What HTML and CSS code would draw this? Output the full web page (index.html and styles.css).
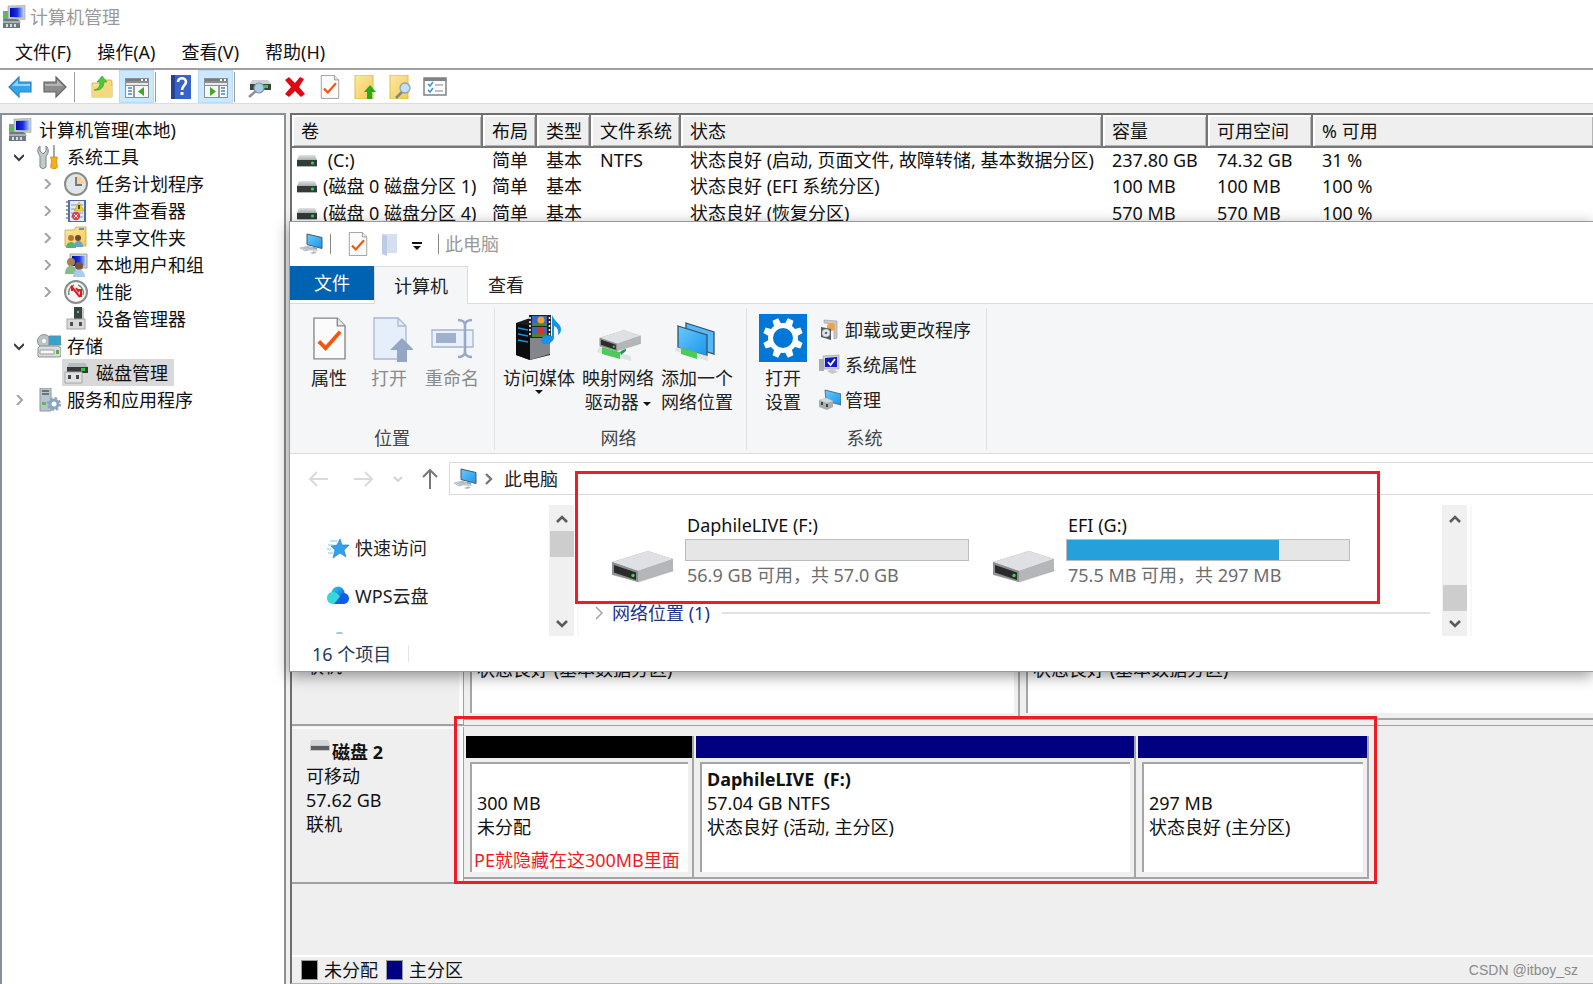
FILE: index.html
```html
<!DOCTYPE html>
<html lang="zh-CN">
<head>
<meta charset="utf-8">
<title>计算机管理</title>
<link rel="stylesheet" href="styles.css">
</head>
<body>
<svg class="defs" aria-hidden="true">
  <defs>
    <linearGradient id="gBlue" x1="0" y1="0" x2="1" y2="1"><stop offset="0" stop-color="#6cc8fb"/><stop offset="1" stop-color="#1897ef"/></linearGradient>
    <linearGradient id="gNavy" x1="0" y1="0" x2="1" y2="0"><stop offset="0" stop-color="#0008b8"/><stop offset=".55" stop-color="#1a2fe0"/><stop offset="1" stop-color="#9fc0ff"/></linearGradient>
    <linearGradient id="gGray" x1="0" y1="0" x2="0" y2="1"><stop offset="0" stop-color="#e2e4e6"/><stop offset="1" stop-color="#a9adb0"/></linearGradient>
    <linearGradient id="gYellow" x1="0" y1="0" x2="1" y2="1"><stop offset="0" stop-color="#ffe9a0"/><stop offset="1" stop-color="#f2ca55"/></linearGradient>
    <linearGradient id="gCloud" x1="0" y1="0" x2="1" y2="1"><stop offset="0" stop-color="#2fd6f0"/><stop offset="1" stop-color="#0a52e0"/></linearGradient>
  </defs>
  <symbol id="mgmt" viewBox="0 0 24 24">
    <path d="M1 6h5v10H1z" fill="#8d959b"/><path d="M2 9h3v3H2z" fill="#38d33c"/>
    <path d="M6 1l17-.6v14L6 14z" fill="#c9cdc4" stroke="#9a9f9b" stroke-width=".6"/>
    <path d="M8 3l13-.5v10L8 12z" fill="url(#gNavy)"/>
    <path d="M13 14h4l2 4h-8z" fill="#b6bbbe"/>
    <path d="M1 16l2-2h12l3 2v7H1z" fill="#6c7a80"/><path d="M1 16h17v2H1z" fill="#a6b1b6"/>
    <path d="M4 19h2v3H4zM8 19h2v3H8zM12 19h2v3h-2z" fill="#d6dde0"/>
  </symbol>
  <symbol id="vol" viewBox="0 0 20 12">
    <path d="M2 0h16l2 5H0z" fill="url(#gGray)"/><path d="M0 5h20v6H0z" fill="#333a3a"/><path d="M0 11h20v1H0z" fill="#b5b8ba"/><circle cx="15.500" cy="8" r="1.600" fill="#25e035"/>
  </symbol>
  <symbol id="volgray" viewBox="0 0 20 12">
    <path d="M1 0h17l2 5H0z" fill="#d5d8da"/><path d="M0 5h20v6H0z" fill="#c6c8ca"/><path d="M1 6h18v4H1z" fill="#5d5f60"/>
  </symbol>
  <symbol id="thispc" viewBox="0 0 24 22">
    <path d="M7 1l15 3.500v11L7 11.500z" fill="url(#gBlue)" stroke="#4a5a66" stroke-width="1"/>
    <path d="M13 13.500l4 1v3l-5-1z" fill="#8ea0ad"/><path d="M9 17l6 1.500 4-1-5-2z" fill="#c9d3da"/>
    <path d="M0 15l9-2 5 2.500-9 2.500z" fill="#d3dae0" stroke="#9aa6af" stroke-width=".6"/><path d="M3 15.500l7-1.500M5 16.500l7-1.500" stroke="#93a0aa" stroke-width=".6"/>
    <path d="M10 20l4-1.500 3 1-4 1.500z" fill="#aab6bf"/>
  </symbol>
  <symbol id="doccheck" viewBox="0 0 34 44">
    <path d="M1 1h24l8 8v34H1z" fill="#fbfbfb" stroke="#84888c" stroke-width="1.400"/><path d="M25 1v8h8" fill="#e8eaec" stroke="#84888c" stroke-width="1.400"/>
    <path d="M6 25l7 7 15-17" fill="none" stroke="#f4560e" stroke-width="4"/>
  </symbol>
  <symbol id="drive" viewBox="0 0 64 34">
    <path d="M27 33l37-12-3-3-30 8z" fill="#e6e6e7"/>
    <path d="M1 12L37 1l25 8v12L27 32 1 25z" fill="#a9abae"/><path d="M1 12L37 1l25 8-35 12z" fill="#dfe0e3"/>
    <path d="M27 21l35-12v11L27 32z" fill="#b4b6b9"/><path d="M1 12l26 9v11L1 24z" fill="#8d8f92"/><path d="M3 15l22 7.500v7.500L3 22.500z" fill="#2a2a2b"/><circle cx="22" cy="25.500" r="1.700" fill="#2be23a"/>
  </symbol>
  <symbol id="up" viewBox="0 0 12 8"><path d="M1 7l5-5 5 5" fill="none" stroke="#5b5b5b" stroke-width="2.600"/></symbol>
  <symbol id="down" viewBox="0 0 12 8"><path d="M1 1l5 5 5-5" fill="none" stroke="#5b5b5b" stroke-width="2.600"/></symbol>
  <symbol id="open" viewBox="0 0 10 10"><path d="M0 3l5 5 5-5" fill="none" stroke="#3c3c3c" stroke-width="2"/></symbol>
  <symbol id="closed" viewBox="0 0 10 10"><path d="M3 0l5 5-5 5" fill="none" stroke="#a3a3a3" stroke-width="2"/></symbol>
  <symbol id="pane" viewBox="0 0 24 20">
    <path d="M0 0h24v20H0z" fill="#8b8f94"/><path d="M1 1h22v2H1z" fill="#777c82"/><path d="M16 1h2v2h-2zM20 1h2v2h-2z" fill="#fff"/>
    <path d="M1 5h22v2H1z" fill="#e6e8ea"/><path d="M1 8h22v11H1z" fill="#f7f8f9"/>
  </symbol>
</svg>

<header class="titlebar"><svg class="i24"><use href="#mgmt"/></svg><h1>计算机管理</h1></header>
<nav class="menu"><button>文件(F)</button><button>操作(A)</button><button>查看(V)</button><button>帮助(H)</button></nav>

<div class="toolbar">
  <button aria-label="后退"><svg class="i24" viewBox="0 0 24 24"><path d="M1 12L11 2v5h12v10H11v5z" fill="#2ea5ee" stroke="#3683b4" stroke-width="1.200"/><path d="M4 11l6-6v4h12v2z" fill="#8fd5fb"/></svg></button>
  <button aria-label="前进"><svg class="i24" viewBox="0 0 24 24"><path d="M23 12L13 2v5H1v10h12v5z" fill="#8c8c8c" stroke="#666" stroke-width="1.200"/><path d="M20 11l-6-6v4H2v2z" fill="#b5b5b5"/></svg></button>
  <span class="sep"></span>
  <button aria-label="上一级"><svg class="i24" viewBox="0 0 24 24"><path d="M2 8h8l2-3h9l1 2v15H2z" fill="url(#gYellow)" stroke="#c9a24a" stroke-width=".8"/><path d="M2 11h20v11H2z" fill="#f6d782"/><path d="M4 15c4-1 6-3 6-8H7l5-6 5 6h-3c0 6-4 9-10 8z" fill="#4cc93a" stroke="#329a28" stroke-width=".6"/></svg></button>
  <button class="on" aria-label="显示控制台树"><svg class="i24" viewBox="0 0 24 24"><use href="#pane" y="3" width="24" height="20"/><path d="M9 11v11" stroke="#777c82" stroke-width="1.500"/><path d="M3 13h4M3 16h4M3 19h4" stroke="#4d86c4" stroke-width="1.500"/><path d="M19 12v9l-6-4.500z" fill="#41a72c"/></svg></button>
  <span class="sep tight"></span>
  <button aria-label="帮助"><svg class="i24" viewBox="0 0 24 24"><path d="M2 0h20v24H2z" fill="#3a62cc"/><path d="M2 0h4v24H2z" fill="#25418f"/><path d="M9 7c0-5 8-5 8 0 0 3-4 4-4 8" fill="none" stroke="#fff" stroke-width="2.600"/><path d="M11.500 17h3v3h-3z" fill="#fff"/></svg></button>
  <button class="on" aria-label="显示操作窗格"><svg class="i24" viewBox="0 0 24 24"><use href="#pane" y="3" width="24" height="20"/><path d="M15 11v11" stroke="#777c82" stroke-width="1.500"/><path d="M17 13h4M17 16h4M17 19h4" stroke="#4d86c4" stroke-width="1.500"/><path d="M6 12v9l6-4.500z" fill="#41a72c"/></svg></button>
  <span class="sep tight"></span>
  <button aria-label="连接"><svg class="i24" viewBox="0 0 24 24"><path d="M4 5h16l3 4H2z" fill="#cfd2d4"/><path d="M2 9h21v6H2z" fill="#3b4242"/><path d="M16 10h4v3h-4z" fill="#2bd43b"/><path d="M8 16l-7 6" stroke="#8b9399" stroke-width="2.500"/><circle cx="11" cy="13" r="5" fill="#a9cde6" stroke="#7d96a6" stroke-width="1.200"/></svg></button>
  <button aria-label="删除"><svg class="i24" viewBox="0 0 24 24"><path d="M2 5l4-3 6 6 5-6 4 2-5 8 6 7-4 3-6-6-6 6-4-3 6-7z" fill="#dd0a14"/></svg></button>
  <button aria-label="属性"><svg class="i24"><use href="#doccheck"/></svg></button>
  <button aria-label="上移"><svg class="i24" viewBox="0 0 24 24"><path d="M2 0h18v24H2z" fill="url(#gYellow)" stroke="#e0bb50"/><path d="M14 24v-7h-3l6-7 6 7h-4v7z" fill="#27ab1e"/></svg></button>
  <button aria-label="查找"><svg class="i24" viewBox="0 0 24 24"><path d="M2 0h18v24H2z" fill="url(#gYellow)" stroke="#e0bb50"/><path d="M14 17l-6 6" stroke="#7d868c" stroke-width="2.500"/><circle cx="17" cy="13" r="5" fill="#c4e0f2" stroke="#8aa4b5" stroke-width="1.300"/></svg></button>
  <button aria-label="设置"><svg class="i24" viewBox="0 0 24 24"><path d="M1 3h22v17H1z" fill="#fdfdfd" stroke="#7e8389" stroke-width="1.500"/><path d="M1 3h22v3H1z" fill="#7e8389"/><path d="M5 9l2 2 3-4M5 15l2 2 3-4" fill="none" stroke="#3b95d6" stroke-width="1.500"/><path d="M12 10h8M12 16h8" stroke="#a9adb1" stroke-width="1.500"/></svg></button>
</div>

<main class="panes">
  <aside class="treepane">
    <ul class="tree">
      <li class="l0"><svg class="i24"><use href="#mgmt"/></svg><span>计算机管理(本地)</span></li>
      <li class="l1"><svg class="chev"><use href="#open"/></svg><svg class="i24" viewBox="0 0 24 24"><path d="M3 1v5l3 3 3-3V1c3 2 3 8 0 10v11l-3 2-3-2V11C0 8 0 3 3 1z" fill="#c3c8ca" stroke="#7f8588"/><path d="M16 0h2v12h-2z" fill="#a3a8ab"/><path d="M13.500 12h7l-1 4 1 6-2 2h-3l-2-2 1-6z" fill="#f2ae1c" stroke="#c4860c" stroke-width=".7"/></svg><span>系统工具</span></li>
      <li class="l2"><svg class="chev"><use href="#closed"/></svg><svg class="i24" viewBox="0 0 24 24"><circle cx="12" cy="12" r="11" fill="#dfe6ea" stroke="#8c8c8a" stroke-width="2"/><path d="M12 4a8 8 0 0 1 8 8h-8z" fill="#f6d293"/><path d="M12 5v8h6" fill="none" stroke="#6a7782" stroke-width="1.800"/></svg><span>任务计划程序</span></li>
      <li class="l2"><svg class="chev"><use href="#closed"/></svg><svg class="i24" viewBox="0 0 24 24"><path d="M4 1h18v22H4z" fill="#4e6bad"/><path d="M6 2h14v20H6z" fill="#e3eaf6"/><path d="M7 6h12M7 10h12M7 14h12M7 18h12" stroke="#7d9cd2"/><path d="M2 3h4M2 7h4M2 11h4M2 15h4M2 19h4" stroke="#778" stroke-width="1.600"/><path d="M15 3l5 9H10z" fill="#f7cf1d" stroke="#b8920c" stroke-width=".5"/><path d="M15 6v4" stroke="#222" stroke-width="1.500"/><circle cx="12" cy="17" r="4.200" fill="#d9404a"/><path d="M10 15l4 4M14 15l-4 4" stroke="#fff"/></svg><span>事件查看器</span></li>
      <li class="l2"><svg class="chev"><use href="#closed"/></svg><svg class="i24" viewBox="0 0 24 24"><path d="M1 4h9l2-3h10v19H1z" fill="url(#gYellow)" stroke="#caa24c" stroke-width=".8"/><path d="M15 2h5v2h-5z" fill="#4f9be0"/><circle cx="7" cy="12" r="3" fill="#b5763e"/><circle cx="14" cy="12" r="3" fill="#6b4a30"/><path d="M2 22c0-8 10-8 10 0z" fill="#57b46c"/><path d="M10 21c0-8 9-8 9 0z" fill="#62a3d0"/></svg><span>共享文件夹</span></li>
      <li class="l2"><svg class="chev"><use href="#closed"/></svg><svg class="i24" viewBox="0 0 24 24"><path d="M6 1h17v14H6z" fill="#d0d3cc" stroke="#a1a49f"/><path d="M8 3h13v10H8z" fill="url(#gNavy)"/><circle cx="7" cy="9" r="4" fill="#a5824f"/><path d="M1 21c0-11 11-11 12 0z" fill="#86bd86"/><circle cx="15" cy="13" r="4" fill="#79543a"/><path d="M9 24c0-10 12-10 12 0z" fill="#a9cbee"/></svg><span>本地用户和组</span></li>
      <li class="l2"><svg class="chev"><use href="#closed"/></svg><svg class="i24" viewBox="0 0 24 24"><circle cx="12" cy="12" r="11" fill="#f4f5f4" stroke="#8c8c8a" stroke-width="2"/><path d="M5 15a8 8 0 0 1 5-10M14 5a8 8 0 0 1 5 10" stroke="#5e9a78" stroke-width="1.500" fill="none"/><path d="M7 6l9 11M8 6v5M17 17v-7h-3M12 8l3 4" stroke="#dd1c22" stroke-width="2" fill="none"/></svg><span>性能</span></li>
      <li class="l2"><svg class="chev"></svg><svg class="i24" viewBox="0 0 24 24"><path d="M10 0h8v13h-8z" fill="#3d4244"/><path d="M13 4h2v2h-2z" fill="#3ee04d"/><path d="M18 1h2v12h-2z" fill="#c5c8c9"/><path d="M3 12h18v10H3z" fill="#d8dadb" stroke="#a2a5a6"/><path d="M6 15h3v4H6zM15 15h3v4h-3z" fill="#4b4f51"/></svg><span>设备管理器</span></li>
      <li class="l1"><svg class="chev"><use href="#open"/></svg><svg class="i24" viewBox="0 0 24 24"><circle cx="7" cy="7" r="6.500" fill="#bcc2c4" stroke="#8b9092"/><circle cx="7" cy="7" r="2" fill="#eff"/><path d="M12 2h12v9H12z" fill="#34a3cf" stroke="#6f8b98"/><path d="M1 14l2-2h18l3 2v8l-1 1H2l-1-1z" fill="#d9dcde" stroke="#8d9193"/><path d="M3 16h14v4H3z" fill="#f8f8f8" stroke="#9a9d9f"/><path d="M19 16h3v4h-3z" fill="#57b344"/></svg><span>存储</span></li>
      <li class="l2 selected"><svg class="chev"></svg><svg class="i24" viewBox="0 0 24 24"><path d="M5 2h16l3 4H3z" fill="#b9bcbe"/><path d="M3 6h21v6H3z" fill="#343a3a"/><path d="M17 7h4v3h-4z" fill="#24c835"/><path d="M1 11h17v11H1z" fill="#e1e2e3" stroke="#a4a6a8"/><path d="M4 14h3v4H4zM12 14h3v4h-3z" fill="#46494b"/></svg><span>磁盘管理</span></li>
      <li class="l1"><svg class="chev"><use href="#closed"/></svg><svg class="i24" viewBox="0 0 24 24"><path d="M3 0h11v23H3z" fill="#b9c3cc" stroke="#8b98a3"/><path d="M5 3h7M5 6h7" stroke="#4d5a63" stroke-width="1.500"/><path d="M5 14h4v3H5z" fill="#4fc057"/><circle cx="17" cy="16" r="4" fill="#fff" stroke="#88a5c3" stroke-width="3"/><circle cx="17" cy="16" r="6" fill="none" stroke="#88a5c3" stroke-width="2" stroke-dasharray="2.500 2.200"/></svg><span>服务和应用程序</span></li>
    </ul>
  </aside>

  <section class="work">
    <div class="volumes">
      <table>
        <colgroup><col class="c-vol"><col class="c-s"><col class="c-s"><col class="c-fs"><col class="c-st"><col class="c-n"><col class="c-n"><col></colgroup>
        <thead><tr><th>卷</th><th>布局</th><th>类型</th><th>文件系统</th><th>状态</th><th>容量</th><th>可用空间</th><th>% 可用</th></tr></thead>
        <tbody>
          <tr><td class="v"><svg class="ivol"><use href="#vol"/></svg>&nbsp;(C:)</td><td>简单</td><td>基本</td><td>NTFS</td><td>状态良好 (启动, 页面文件, 故障转储, 基本数据分区)</td><td>237.80 GB</td><td>74.32 GB</td><td>31 %</td></tr>
          <tr><td class="v"><svg class="ivol"><use href="#vol"/></svg>(磁盘 0 磁盘分区 1)</td><td>简单</td><td>基本</td><td></td><td>状态良好 (EFI 系统分区)</td><td>100 MB</td><td>100 MB</td><td>100 %</td></tr>
          <tr><td class="v"><svg class="ivol"><use href="#vol"/></svg>(磁盘 0 磁盘分区 4)</td><td>简单</td><td>基本</td><td></td><td>状态良好 (恢复分区)</td><td>570 MB</td><td>570 MB</td><td>100 %</td></tr>
        </tbody>
      </table>
    </div>

    <div class="disk">
      <div class="label"><p></p><p></p><p></p><p>联机</p></div>
      <div class="graph wide">
        <div class="part" style="width:556px"><div class="bar"></div><div class="cell"><p></p><p></p><p>状态良好 (基本数据分区)</p></div></div>
        <div class="part rest"><div class="bar"></div><div class="cell"><p></p><p></p><p>状态良好 (基本数据分区)</p></div></div>
      </div>
    </div>
    <div class="disk">
      <div class="label"><p class="name"><svg class="ivol"><use href="#volgray"/></svg><b>磁盘 2</b></p><p>可移动</p><p>57.62 GB</p><p>联机</p></div>
      <div class="graph">
        <div class="part" style="width:230px"><div class="bar free"></div><div class="cell"><p></p><p>300 MB</p><p>未分配</p><span class="note">PE就隐藏在这300MB里面</span></div></div>
        <div class="part" style="width:442px"><div class="bar"></div><div class="cell"><p><b>DaphileLIVE&nbsp; (F:)</b></p><p>57.04 GB NTFS</p><p>状态良好 (活动, 主分区)</p></div></div>
        <div class="part" style="width:233px"><div class="bar"></div><div class="cell"><p></p><p>297 MB</p><p>状态良好 (主分区)</p></div></div>
        <span class="mark"></span>
      </div>
    </div>
    <div class="blank"></div>
    <footer class="legend"><span class="key free"></span><span>未分配</span><span class="key"></span><span>主分区</span><span class="credit">CSDN @itboy_sz</span></footer>

    <section class="explorer">
      <div class="caption">
        <svg class="i24"><use href="#thispc"/></svg><span class="bar-sep"></span>
        <svg class="i24 q1"><use href="#doccheck"/></svg>
        <svg class="i24" viewBox="0 0 24 24"><path d="M4 2h15v19H7z" fill="#d4dff0"/><path d="M4 2l5 2v20l-5-2z" fill="#bccce4"/></svg>
        <svg class="qdrop" viewBox="0 0 10 8"><path d="M0 0h10v2H0zM1 4h8L5 8z" fill="#111"/></svg>
        <span class="bar-sep"></span><h2>此电脑</h2>
      </div>
      <div class="tabs"><button class="file">文件</button><button class="active">计算机</button><button>查看</button></div>
      <div class="ribbon">
        <div class="group g1">
          <div class="tools">
            <button><svg class="big" viewBox="0 0 48 48"><use href="#doccheck" x="8" y="3" width="33" height="43"/></svg><span>属性</span></button>
            <button disabled><svg class="big" viewBox="0 0 48 48"><path d="M9 4h24l8 8v33H9z" fill="#e6eefb" stroke="#a9b8d2" stroke-width="1.300"/><path d="M33 4v8h8" fill="none" stroke="#a9b8d2" stroke-width="1.300"/><path d="M37 24l12 12h-7v12H32V36h-7z" fill="#94a6c5"/></svg><span>打开</span></button>
            <button disabled><svg class="big" viewBox="0 0 48 48"><path d="M4 16h41v17H4z" fill="#eaf1fb" stroke="#a4b5d2" stroke-width="1.300"/><path d="M8 19h20v10H8z" fill="#9eb0cc"/><path d="M30 6c4 0 7 2 7 5 0-3 3-5 7-5M37 9v31M30 43c4 0 7-2 7-5 0 3 3 5 7 5" fill="none" stroke="#98a9c6" stroke-width="2.600"/></svg><span>重命名</span></button>
          </div>
          <h3>位置</h3>
        </div>
        <div class="group g2">
          <div class="tools">
            <button><svg class="big" viewBox="0 0 48 48"><path d="M1 9l14-5 20 5v32l-20 5-14-5z" fill="#1b1c1e"/><path d="M15 12l20-4v32l-20 6z" fill="#83868b"/><path d="M1 9l14 3v34L1 41z" fill="#0b0c0e"/><path d="M3 14l10 2M3 20l10 2M3 26l10 2" stroke="#1f8ee0" stroke-width="1.600"/><path d="M14 1h22v23H14z" fill="#222"/><path d="M17 2h15v10H17zM17 13h15v10H17z" fill="#3a66c9"/><path d="M17 9h15v3H17zM17 20h15v3H17z" fill="#4e8432"/><circle cx="26" cy="6" r="3.500" fill="#f1a62b"/><circle cx="26" cy="17" r="3.500" fill="#d9362b"/><path d="M15 3v20M34.500 3v20" stroke="#fff" stroke-width="1.500" stroke-dasharray="2 2"/><path d="M37 1c2 6 9 9 9 14 0 4-2 5-3 6 1-5-1-8-4-9v12c-1 6-12 9-13 3 0-5 6-7 11-5z" fill="#1793ec"/></svg><span>访问媒体</span><svg class="drop" viewBox="0 0 8 4"><path d="M0 0h8L4 4z" fill="#111"/></svg></button>
            <button><svg class="big" viewBox="0 0 48 48"><path d="M5 33l32 9v5L3 38z" fill="#dfe4e3"/><path d="M8 33l18 5v7L8 40z" fill="#4fca5a"/><path d="M26 38l6-5v4l-5 4z" fill="#1d9c53"/><use href="#drive" x="5" y="15" width="43" height="24"/></svg><span>映射网络</span><span>驱动器 <svg class="drop inl" viewBox="0 0 8 4"><path d="M0 0h8L4 4z" fill="#111"/></svg></span></button>
            <button><svg class="big" viewBox="0 0 48 48"><path d="M13 9l28 9v22l-28-9z" fill="#56b8f5" stroke="#35536a" stroke-width="1.300"/><path d="M5 12l29 9v21L5 34z" fill="url(#gBlue)" stroke="#35536a" stroke-width="1.300"/><path d="M3 33l32 9v5L2 37z" fill="#dfe4e3"/><path d="M8 34l16 4v7L8 40z" fill="#4fca5a"/></svg><span>添加一个</span><span>网络位置</span></button>
          </div>
          <h3>网络</h3>
        </div>
        <div class="group g3">
          <div class="tools">
            <button><svg class="big" viewBox="0 0 48 48"><path d="M0 0h48v48H0z" fill="#0178d7"/><circle cx="24" cy="24" r="12.500" fill="none" stroke="#fff" stroke-width="5"/><g fill="#fff" transform="rotate(22.500 24 24)"><path d="M21 4h6l1 8h-8zM21 44h6l1-8h-8zM4 21v6l8 1v-8zM44 21v6l-8 1v-8z"/><path d="M21 4h6l1 8h-8zM21 44h6l1-8h-8zM4 21v6l8 1v-8zM44 21v6l-8 1v-8z" transform="rotate(45 24 24)"/></g></svg><span>打开</span><span>设置</span></button>
            <div class="rows">
              <button><svg class="i22" viewBox="0 0 22 22"><path d="M5 1l13 1v17l-3 1V5L5 4z" fill="#c8c8c6" stroke="#9b9b99" stroke-width=".6"/><circle cx="12" cy="8" r="4" fill="#f0a344"/><path d="M2 8l10 2v11L2 18z" fill="#535b60"/><circle cx="7" cy="14" r="4" fill="#e3e8eb" stroke="#99a" stroke-width=".6"/><circle cx="7" cy="14" r="1.300" fill="#667"/></svg>卸载或更改程序</button>
              <button><svg class="i22" viewBox="0 0 22 22"><path d="M0 5h5v12H0z" fill="#a9adaf"/><path d="M4 2l16-1v14H5z" fill="#ced1cf" stroke="#989b9a" stroke-width=".6"/><path d="M6 4l12-1v10H6z" fill="#1018c4"/><path d="M9 8l2.500 3L16 5" stroke="#fff" stroke-width="1.800" fill="none"/><path d="M8 17l6-2 5 3-6 2z" fill="#c5c8ca"/></svg>系统属性</button>
              <button><svg class="i22" viewBox="0 0 22 22"><path d="M6 1l16 4v11L7 12z" fill="url(#gBlue)" stroke="#4a5a66" stroke-width=".8"/><path d="M0 11l7-2 7 3v6l-6 3-8-3z" fill="#a8adb0"/><path d="M0 11l7-2 7 3-6 2z" fill="#d3d6d8"/><path d="M2 13h2v3H2zM7 15h2v3H7z" fill="#3c4042"/></svg>管理</button>
            </div>
          </div>
          <h3>系统</h3>
        </div>
      </div>
      <div class="nav">
        <button aria-label="返回" disabled><svg class="i20" viewBox="0 0 20 20"><path d="M9 3l-7 7 7 7M2 10h18" fill="none" stroke="#dadada" stroke-width="2"/></svg></button>
        <button aria-label="前进" disabled><svg class="i20" viewBox="0 0 20 20"><path d="M11 3l7 7-7 7M18 10H0" fill="none" stroke="#dadada" stroke-width="2"/></svg></button>
        <button class="recent" aria-label="最近位置"><svg viewBox="0 0 10 10"><path d="M1 3l4 4 4-4" fill="none" stroke="#d2d2d2" stroke-width="1.800"/></svg></button>
        <button aria-label="向上"><svg class="i20" viewBox="0 0 20 20"><path d="M3 8l7-7 7 7M10 1v19" fill="none" stroke="#777" stroke-width="2"/></svg></button>
        <div class="address"><svg class="i24"><use href="#thispc"/></svg><svg class="crumb" viewBox="0 0 8 12"><path d="M1 1l5 5-5 5" fill="none" stroke="#777" stroke-width="2.400"/></svg><button>此电脑</button></div>
      </div>
      <div class="browse">
        <ul class="places">
          <li><svg class="i22" viewBox="0 0 22 22"><path d="M13 2l2 6h7l-5 5 2 7-6-4-7 5 2-8-4-4 6-1z" fill="#2fa2ee" stroke="#1678c4" stroke-width=".6"/><path d="M3 4h7M1 8h5M0 12h4M1 16h5" stroke="#7cc6f6" stroke-width="1.200"/></svg>快速访问</li>
          <li><svg class="i22" viewBox="0 0 22 22"><circle cx="11" cy="8" r="6.500" fill="url(#gCloud)"/><path d="M6 7c5 0 7 4 10 12H6C-2 19-2 7 6 7z" fill="#36d8d8"/><path d="M7 19l9-11c8 0 8 11 0 11z" fill="#0c5fe6"/></svg>WPS云盘</li>
          <li class="peek"></li>
        </ul>
        <div class="scroll"><svg><use href="#up"/></svg><i></i><svg><use href="#down"/></svg></div>
        <div class="content">
          <div class="drives">
            <div class="drive"><svg><use href="#drive"/></svg><div><p>DaphileLIVE (F:)</p><div class="meter"></div><p class="sub">56.9 GB 可用，共 57.0 GB</p></div></div>
            <div class="drive"><svg><use href="#drive"/></svg><div><p>EFI (G:)</p><div class="meter"><i style="width:75%"></i></div><p class="sub">75.5 MB 可用，共 297 MB</p></div></div>
          </div>
          <div class="netloc"><svg viewBox="0 0 10 16"><path d="M1 2l6 6-6 6" fill="none" stroke="#9a9a9a" stroke-width="1.300"/></svg><span>网络位置 (1)</span><hr></div>
        </div>
        <div class="scroll low"><svg><use href="#up"/></svg><i></i><svg><use href="#down"/></svg></div>
        <div class="details"></div>
      </div>
      <div class="status">16 个项目<span class="stat-sep"></span></div>
      <span class="mark"></span>
    </section>
  </section>
</main>
</body>
</html>
```
FILE: styles.css
```css
* { box-sizing: border-box; }
body, h1, h2, h3, p, ul { margin: 0; padding: 0; font-weight: 400; font-size: 18px; }
body {
  min-height: 100vh; display: flex; flex-direction: column; overflow: hidden;
  font-family: "Noto Sans", "Noto Sans CJK SC", sans-serif; line-height: 24px;
  color: #111; background: #fff;
}
ul { list-style: none; }
button { font: inherit; color: inherit; background: none; border: 0; padding: 0; margin: 0; }
svg { display: block; flex: none; }
.defs { width: 0; height: 0; position: absolute; }
.i24 { width: 24px; height: 24px; }
.i22 { width: 22px; height: 22px; }
.i20 { width: 20px; height: 20px; }
.ivol { width: 20px; height: 12px; }

.titlebar { height: 35px; display: flex; align-items: center; gap: 4px; padding: 0 0 2px 2px; }
.titlebar h1 { color: #999; }
.menu { height: 35px; display: flex; align-items: center; gap: 26px; padding-left: 15px; border-bottom: 2px solid #a0a0a0; }
.toolbar { height: 34px; display: flex; align-items: center; padding: 1px 2px; border-bottom: 1px solid #ddd; }
.toolbar button { width: 35px; height: 33px; display: flex; align-items: center; justify-content: center; }
.toolbar .on { background: #cce8ff; box-shadow: inset 0 0 0 1px #b4dbfa; }
.toolbar .sep { width: 1px; height: 30px; margin: 0 9px 0 2px; background: #9c9c9c; }
.toolbar .sep.tight { margin: 0 7px 0 1px; }

.panes { flex: 1; display: flex; gap: 4px; padding-top: 9px; background: #efefef; }
.treepane { flex: none; width: 286px; background: #fff; border: 2px solid #8a9099; border-bottom: 0; padding-top: 1px; }
.tree li { height: 27px; display: flex; align-items: center; }
.tree .chev { width: 10px; height: 10px; }
.tree .l0 { padding-left: 6px; gap: 7px; }
.tree .l1 { padding-left: 12px; }
.tree .l1 .chev { margin-right: 13px; }
.tree .l1 span { margin-left: 6px; }
.tree .l2 { padding-left: 40px; }
.tree .l2 .chev { margin-right: 12px; }
.tree .l2 span { margin-left: 8px; }
.tree .selected { width: 172px; background: linear-gradient(#d9d9d9, #d9d9d9) right / 112px 100% no-repeat; }

.work { position: relative; flex: 1; min-width: 0; display: flex; flex-direction: column; border: 2px solid #6e6e6e; border-right: 0; border-bottom: 1px solid #b5b5b5; }
.volumes { flex: none; height: 454px; background: #fff; }
.volumes table { width: 100%; table-layout: fixed; border-collapse: collapse; }
.c-vol { width: 190px; }
.c-s { width: 54px; }
.c-fs { width: 90px; }
.c-st { width: 422px; }
.c-n { width: 105px; }
.volumes th { height: 32px; padding: 0 0 0 9px; text-align: left; font-weight: 400; white-space: nowrap; background: #efefef; border-right: 2px solid #777; border-bottom: 2px solid #777; box-shadow: inset 2px 2px #fff, inset -1px -1px #b5b5b5; }
.volumes th:last-child { border-right: 0; }
.volumes td { height: 27px; padding: 0 0 0 10px; vertical-align: top; white-space: nowrap; }
.volumes td.v { padding-left: 5px; }
.v .ivol { display: inline-block; margin-right: 6px; }

.disk { flex: none; height: 158px; display: flex; background: #efefef; border-bottom: 1px solid #efefef; }
.label { flex: none; width: 172px; padding: 13px 0 0 14px; border-right: 1px solid #a0a0a0; border-bottom: 2px solid #a0a0a0; box-shadow: inset -4px 2px #fafafa; }
.label p, .cell p { height: 24px; white-space: nowrap; }
.label .name { display: flex; gap: 2px; padding-left: 4px; }
b { font-weight: 700; }
.graph { position: relative; display: flex; padding: 9px 0 5px; }
.graph.wide { flex: 1; border-bottom: 1px solid #a0a0a0; box-shadow: inset 0 -6px #efefef, inset 0 -7px #a0a0a0; }
.part { flex: none; display: flex; flex-direction: column; border-right: 2px solid #a5a5a5; border-bottom: 2px solid #a5a5a5; }
.part.rest { flex: 1; border-right: 0; }
.part.rest .cell { margin-right: 0; }
.bar { height: 22px; margin: 0 0 0 2px; background: #000080; }
.bar.free { background: #000; }
.cell { position: relative; flex: 1; margin: 4px 4px 5px 6px; padding: 3px 0 0 5px; background: #fff; border: 2px solid #a5a5a5; border-right: 0; border-bottom: 0; }
.note { position: absolute; left: 2px; bottom: 0; color: #ee1c25; white-space: nowrap; }
.mark { position: absolute; border: 3px solid #ee1c25; pointer-events: none; }
.graph .mark { left: -10px; top: -11px; width: 923px; height: 168px; }
.blank { flex: 1; }
.legend { flex: none; height: 28px; display: flex; align-items: center; gap: 6px; padding-left: 9px; border-top: 2px solid #fff; }
.key { width: 17px; height: 20px; background: #000080; border: 1px solid #9a9a9a; }
.key:not(.free) { margin-left: 2px; }
.key.free { background: #000; }
.credit { margin-left: auto; padding-right: 15px; color: #8a8a8a; font-family: "Liberation Sans", sans-serif; font-size: 14px; }

.explorer { position: absolute; left: -3px; right: 0; top: 106px; color: #222; background: #fff; border: 1px solid #999; border-right: 0; box-shadow: 0 4px 14px rgba(0, 0, 0, .4); }
.caption { height: 44px; display: flex; align-items: center; padding-left: 10px; }
.caption .bar-sep { width: 1px; height: 20px; margin: 0 6px; background: #888; }
.caption .q1 { margin: 0 8px 0 9px; }
.qdrop { width: 10px; height: 8px; margin: 4px 10px 0 10px; }
.caption h2 { color: #999; }
.tabs { height: 38px; display: flex; border-bottom: 1px solid #dadbdc; }
.tabs button { padding: 0 20px; }
.tabs .file { width: 84px; height: 34px; color: #fff; background: #0063b1; }
.tabs .active { width: 94px; height: 38px; padding: 0; background: #f4f6f8; border: 1px solid #dadbdc; border-bottom: 0; }
.ribbon { height: 150px; display: flex; padding: 4px 0 3px; background: #f4f6f8; border-bottom: 1px solid #dadbdc; }
.group { display: flex; flex-direction: column; padding-top: 6px; border-right: 1px solid #dfe1e3; }
.group h3 { margin-top: auto; padding-right: 4px; text-align: center; color: #444; }
.g1 { width: 205px; }
.g1 h3 { padding-right: 0; }
.g2 { width: 252px; }
.g3 { width: 240px; }
.tools { display: flex; }
.tools button { display: flex; flex-direction: column; align-items: center; white-space: nowrap; }
.tools button:disabled { color: #8a8a8a; }
.g1 .tools { justify-content: space-between; padding: 0 15px; }
.g1 button { min-width: 48px; }
.g2 .tools { gap: 7px; padding-left: 8px; }
.g3 .tools { gap: 12px; padding-left: 12px; }
.big { width: 48px; height: 48px; margin-bottom: 4px; }
.drop { width: 8px; height: 4px; }
.drop.inl { display: inline-block; vertical-align: middle; }
.rows { display: flex; flex-direction: column; align-items: flex-start; gap: 11px; padding-top: 4px; }
.tools .rows button { flex-direction: row; gap: 4px; }

.nav { height: 49px; display: flex; align-items: center; padding: 0 0 0 18px; }
.nav > button { margin-right: 26px; }
.nav > .recent { width: 10px; margin: 0 17px 0 -7px; }
.nav .recent + button { margin-right: 9px; }
.address { flex: 1; height: 33px; display: flex; align-items: center; padding-left: 4px; border: 1px solid #d9d9d9; border-right: 0; }
.crumb { width: 8px; height: 12px; margin: 0 11px 0 7px; }
.browse { height: 133px; display: flex; padding-top: 2px; }
.places { width: 259px; padding: 31px 0 0 37px; overflow: hidden; }
.places li { display: flex; align-items: center; gap: 6px; height: 24px; margin-bottom: 24px; }
.places .peek { width: 7px; height: 2px; margin-left: 9px; background: #a9c5e4; border-radius: 4px 4px 0 0; }
.scroll { flex: none; width: 25px; display: flex; flex-direction: column; align-items: center; background: #f0f0f0; box-shadow: 3px 0 #fff, 5px 0 #f8f8f8; }
.scroll svg { width: 12px; height: 8px; margin: 10px 0 8px; }
.scroll i { width: 24px; height: 26px; background: #cdcdcd; }
.scroll svg:last-child { margin: auto 0 8px; }
.scroll.low i { margin-top: auto; }
.scroll.low svg:last-child { margin-top: 9px; }
.content { flex: 1; min-width: 0; padding: 8px 12px 0 37px; overflow: hidden; }
.drives { display: flex; gap: 23px; color: #111; }
.drive { display: flex; gap: 10px; }
.drive > svg { width: 64px; height: 34px; margin-top: 37px; }
.drive > div { width: 284px; }
.drive p { padding-left: 2px; }
.drive .sub { color: #6d6d6d; }
.meter { height: 22px; margin: 2px 0; background: #e6e6e6; border: 1px solid #bcbcbc; }
.meter i { display: block; height: 100%; background: #26a0da; }
.netloc { display: flex; align-items: center; margin: 14px 0 0 -16px; color: #1e3287; }
.netloc svg { width: 10px; height: 16px; margin-right: 7px; }
.netloc hr { flex: 1; height: 2px; margin: 0 0 0 12px; border: 0; background: #e2e2e2; }
.details { flex: none; width: 126px; }
.status { height: 35px; display: flex; align-items: center; gap: 17px; padding-left: 22px; color: #1e395b; }
.stat-sep { width: 1px; height: 17px; background: #e5e5e5; }
.explorer .mark { left: 285px; top: 249px; width: 805px; height: 133px; }
```
